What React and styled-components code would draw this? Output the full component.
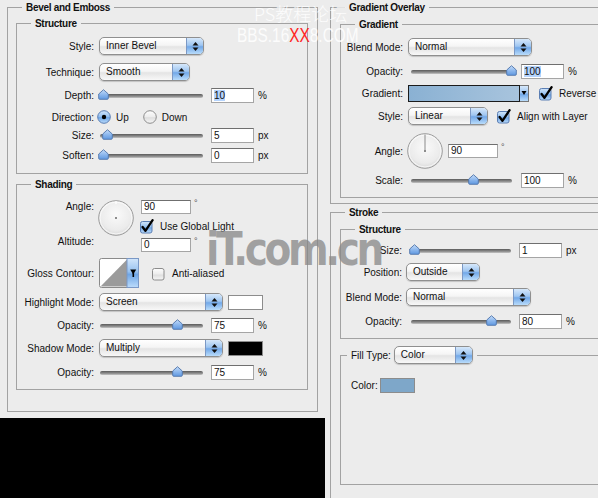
import React from "react";
import styled, { createGlobalStyle } from "styled-components";

const GlobalStyle = createGlobalStyle`
  body {
    margin: 0;
    background: #ececec;
    font-family: "Liberation Sans", Arial, sans-serif;
    font-size: 10px;
    color: #111;
  }
`;

const Page = styled.div`
  position: relative;
  display: flex;
  width: 598px;
  height: 498px;
  overflow: hidden;
  background: #ececec;
`;

const LeftCol = styled.div`
  flex: none;
  width: 325px;
  display: flex;
  flex-direction: column;
  padding-top: 1px;
`;

const RightCol = styled.div`
  flex: 1;
  margin-left: 5px;
  padding-top: 1px;
  display: flex;
  flex-direction: column;
  overflow: hidden;
`;

const Group = styled.fieldset`
  flex: none;
  margin: ${(p) => p.$m || "0"};
  padding: 0 0 ${(p) => p.$pb || 0}px 0;
  border: 1px solid #a2a2a2;
  min-width: 0;
  width: ${(p) => (p.$w ? p.$w + "px" : "auto")};
`;

const Legend = styled.legend`
  margin-left: 14px;
  padding: 0 4px;
  font-weight: bold;
  font-size: 10px;
  line-height: 13px;
  letter-spacing: -0.3px;
`;

const FillLegend = styled.legend`
  display: flex;
  align-items: center;
  margin-left: 6px;
  padding: 0 4px;
  gap: 3px;
`;

const Row = styled.div`
  display: flex;
  align-items: center;
  height: ${(p) => p.$h || 18}px;
  margin-top: ${(p) => p.$mt || 0}px;
`;

const Label = styled.span`
  flex: none;
  width: ${(p) => p.$w}px;
  margin-right: ${(p) => (p.$gap === undefined ? 5 : p.$gap)}px;
  text-align: right;
  white-space: nowrap;
`;

const PlainLabel = styled.span`
  margin: 0 2px 0 10px;
`;

const OptText = styled.span`
  margin: 0 ${(p) => p.$mr || 0}px 0 5px;
  white-space: nowrap;
`;

const Unit = styled.span`
  margin-left: 4px;
`;

/* popup menu */
const PopupBox = styled.div`
  flex: none;
  display: flex;
  box-sizing: border-box;
  width: ${(p) => p.$w}px;
  height: 18px;
  border: 1px solid #8f8f8f;
  border-radius: 5px;
  background: linear-gradient(#ffffff, #f5f5f5 45%, #e4e4e4 55%, #f8f8f8);
  box-shadow: 0 1px 1px rgba(0, 0, 0, 0.18);
  overflow: hidden;
`;

const PopupText = styled.span`
  flex: 1;
  padding-left: 6px;
  line-height: 16px;
  white-space: nowrap;
`;

const PopupArrows = styled.span`
  flex: none;
  width: 16px;
  display: flex;
  align-items: center;
  justify-content: center;
  border-left: 1px solid #7b98c4;
  background: linear-gradient(#d6e8fb, #9fc6f1 45%, #72a8e8 55%, #b9dcfb);
`;

const Popup = ({ w, value }) => (
  <PopupBox $w={w}>
    <PopupText>{value}</PopupText>
    <PopupArrows>
      <svg width="7" height="11" viewBox="0 0 7 11">
        <path d="M3.5 1 L6.5 4.5 H0.5 Z" fill="#111" />
        <path d="M0.5 6.5 H6.5 L3.5 10 Z" fill="#111" />
      </svg>
    </PopupArrows>
  </PopupBox>
);

/* slider */
const SliderWrap = styled.div`
  position: relative;
  flex: none;
  width: ${(p) => p.$w}px;
  height: 12px;
  margin-left: ${(p) => p.$ml || 0}px;
  margin-right: ${(p) => (p.$mr === undefined ? 8 : p.$mr)}px;
`;

const Track = styled.div`
  position: absolute;
  left: 0;
  right: 0;
  top: 5px;
  height: 4px;
  border-radius: 2px;
  background: linear-gradient(#5a5a5a, #8f8f8f 60%, #c6c6c6);
`;

const Thumb = styled.svg`
  position: absolute;
  top: 0;
`;

const Slider = ({ w, ml, mr, pct }) => (
  <SliderWrap $w={w} $ml={ml} $mr={mr}>
    <Track />
    <Thumb
      width="11"
      height="11"
      viewBox="0 0 11 11"
      style={{ left: -2 + pct * (w - 4) }}
    >
      <path
        d="M5.5 0.7 L10.3 5 V9.3 Q10.3 10.3 9.3 10.3 H1.7 Q0.7 10.3 0.7 9.3 V5 Z"
        fill="url(#thumbBlue)"
        stroke="#4f74aa"
        strokeWidth="0.9"
      />
    </Thumb>
  </SliderWrap>
);

/* text fields */
const NumBox = styled.div`
  flex: none;
  box-sizing: border-box;
  width: ${(p) => p.$w || 43}px;
  height: ${(p) => p.$h || 15}px;
  padding-left: 2px;
  background: #fff;
  border: 1px solid #a5a5a5;
  border-top-color: #6f6f6f;
  line-height: ${(p) => (p.$h || 15) - 2}px;
  white-space: nowrap;
`;

const Selected = styled.span`
  background: #b5d4fd;
`;

const InputGroup = styled.div`
  display: flex;
  align-items: flex-start;
  margin-left: ${(p) => p.$ml || 0}px;
`;

const Degree = styled.span`
  margin: -2px 0 0 3px;
  font-size: 9px;
  color: #555;
`;

const Swatch = styled.div`
  flex: none;
  box-sizing: border-box;
  width: 35px;
  height: 15px;
  margin-left: ${(p) => p.$ml || 0}px;
  background: ${(p) => p.$bg};
  border: 1px solid #8c8c8c;
`;

/* check boxes, radios */
const BoxSvg = styled.svg`
  flex: none;
  margin-left: ${(p) => p.$ml || 0}px;
`;

const Check = ({ on, ml }) => (
  <BoxSvg $ml={ml} width="15" height="15" viewBox="0 0 15 15">
    <rect
      x="0.5"
      y="2.5"
      width="11.5"
      height="11.5"
      rx="2"
      fill={on ? "url(#aquaBlue)" : "url(#aquaGray)"}
      stroke={on ? "#5b7eb3" : "#8c8c8c"}
    />
    {on && (
      <path
        d="M2.6 8 L5.4 11.8 L12.6 1.2"
        stroke="#000"
        strokeWidth="2.3"
        fill="none"
        strokeLinecap="round"
        strokeLinejoin="round"
      />
    )}
  </BoxSvg>
);

const Radio = ({ on, ml }) => (
  <BoxSvg $ml={ml} width="14" height="14" viewBox="0 0 14 14">
    <circle
      cx="7"
      cy="7"
      r="6.3"
      fill={on ? "url(#aquaBlue)" : "url(#aquaGray)"}
      stroke={on ? "#5b7eb3" : "#8c8c8c"}
    />
    {on && <circle cx="7" cy="7" r="2.2" fill="#000" />}
  </BoxSvg>
);

const Dial = ({ ml, tick }) => (
  <BoxSvg $ml={ml} width="36" height="36" viewBox="0 0 36 36">
    <circle cx="18" cy="18" r="17.3" fill="url(#dialFill)" stroke="#9d9d9d" />
    <circle cx="18" cy="18" r="16" fill="none" stroke="#ffffff" strokeOpacity="0.7" />
    {tick === "line" ? (
      <line x1="18" y1="18" x2="18" y2="1.5" stroke="#8a8a8a" strokeWidth="1" />
    ) : (
      <line x1="18" y1="1" x2="18" y2="4" stroke="#ffffff" strokeWidth="1.2" />
    )}
    <rect x="17" y="17" width="2" height="2" fill="#8c8c8c" />
  </BoxSvg>
);

const ContourPicker = () => (
  <BoxSvg width="40" height="30" viewBox="0 0 40 30">
    <rect x="0.5" y="0.5" width="39" height="29" rx="2" fill="#fff" stroke="#8a8a8a" />
    <polygon points="1.5,28.5 28,1.5 28,28.5" fill="#9b9b9b" />
    <rect x="28" y="0.5" width="11.5" height="29" fill="url(#aquaBlue)" stroke="#7a98c6" />
    <path d="M31.2 11.5 H37.2 L34.2 16.5 Z" fill="#000" />
    <rect x="33.5" y="15" width="1.6" height="4" fill="#000" />
  </BoxSvg>
);

const GradientPick = styled.div`
  flex: none;
  display: flex;
  height: 17px;
`;

const GradientBar = styled.div`
  box-sizing: border-box;
  width: 112px;
  border: 1px solid #1c1c1c;
  background: linear-gradient(90deg, #8ab1d3, #a8c4dd);
`;

const GradientArrow = styled.div`
  box-sizing: border-box;
  width: 9px;
  display: flex;
  align-items: center;
  justify-content: center;
  border: 1px solid #777;
  border-left: none;
  background: linear-gradient(#d6e8fb, #9fc6f1 45%, #72a8e8 55%, #b9dcfb);
`;

/* angle / altitude block */
const AngleBlock = styled.div`
  display: flex;
  height: 52px;
  margin-top: 9px;
`;

const LabelStack = styled.div`
  flex: none;
  width: 77px;
  margin-right: 4px;
  padding-bottom: 4px;
  display: flex;
  flex-direction: column;
  justify-content: space-between;
  text-align: right;
  line-height: 13px;
`;

const FieldStack = styled.div`
  margin-left: 7px;
  display: flex;
  flex-direction: column;
  justify-content: space-between;
`;

const CheckLine = styled.div`
  display: flex;
  align-items: center;
  margin-left: -1px;
`;

const BlackBox = styled.div`
  flex: 1;
  margin-top: 6px;
  background: #000;
`;

/* watermarks over the dialog */
const MarkCn = styled.div`
  position: absolute;
  left: 254px;
  top: 4px;
  font-family: "Noto Sans CJK SC", sans-serif;
  font-size: 18px;
  font-weight: 300;
  line-height: 18px;
  color: rgba(255, 255, 255, 0.85);
  pointer-events: none;
`;

const MarkUrl = styled.div`
  position: absolute;
  left: 237px;
  top: 25px;
  font-family: "Liberation Sans", Arial, sans-serif;
  font-size: 19.5px;
  line-height: 20px;
  color: rgba(255, 255, 255, 0.85);
  transform: scaleX(0.79);
  transform-origin: left top;
  white-space: nowrap;
  pointer-events: none;
`;

const Red = styled.span`
  color: #ff2525;
`;

const MarkIt = styled.div`
  position: absolute;
  left: 206px;
  top: 226px;
  font-family: "DejaVu Sans", sans-serif;
  font-weight: bold;
  font-size: 46px;
  line-height: 46px;
  letter-spacing: -4px;
  color: rgba(135, 135, 135, 0.75);
  transform: scaleX(0.85);
  transform-origin: left top;
  white-space: nowrap;
  pointer-events: none;
`;

const Defs = styled.svg`
  position: absolute;
  width: 0;
  height: 0;
`;

const App = () => {
  return (
    <Page>
      <GlobalStyle />
      <Defs>
        <defs>
          <linearGradient id="aquaBlue" x1="0" y1="0" x2="0" y2="1">
            <stop offset="0" stopColor="#d2e6fb" />
            <stop offset="0.45" stopColor="#98c2f0" />
            <stop offset="0.55" stopColor="#6fa6e6" />
            <stop offset="1" stopColor="#bcdcfb" />
          </linearGradient>
          <linearGradient id="aquaGray" x1="0" y1="0" x2="0" y2="1">
            <stop offset="0" stopColor="#fdfdfd" />
            <stop offset="0.5" stopColor="#ececec" />
            <stop offset="0.55" stopColor="#dedede" />
            <stop offset="1" stopColor="#f7f7f7" />
          </linearGradient>
          <linearGradient id="thumbBlue" x1="0" y1="0" x2="0" y2="1">
            <stop offset="0" stopColor="#c4dcf8" />
            <stop offset="0.5" stopColor="#8fb9ee" />
            <stop offset="1" stopColor="#5f98e0" />
          </linearGradient>
          <radialGradient id="dialFill" cx="0.5" cy="0.4" r="0.6">
            <stop offset="0" stopColor="#fafafa" />
            <stop offset="0.75" stopColor="#ebebeb" />
            <stop offset="1" stopColor="#d8d8d8" />
          </radialGradient>
        </defs>
      </Defs>

      <LeftCol>
        <Group $m="0 7px" $pb={21}>
          <Legend>Bevel and Emboss</Legend>
          <Group $m="3px 9px 0 8px" $pb={9}>
            <Legend>Structure</Legend>
            <Row $mt={7}>
              <Label $w={77}>Style:</Label>
              <Popup w={105} value="Inner Bevel" />
            </Row>
            <Row $mt={8}>
              <Label $w={77}>Technique:</Label>
              <Popup w={91} value="Smooth" />
            </Row>
            <Row $mt={5}>
              <Label $w={77}>Depth:</Label>
              <Slider w={103} ml={1} pct={0} />
              <NumBox>
                <Selected>10</Selected>
              </NumBox>
              <Unit>%</Unit>
            </Row>
            <Row $mt={4}>
              <Label $w={77}>Direction:</Label>
              <Radio on ml={-2} />
              <OptText $mr={14}>Up</OptText>
              <Radio />
              <OptText>Down</OptText>
            </Row>
            <Row>
              <Label $w={77}>Size:</Label>
              <Slider w={103} ml={1} pct={0.04} />
              <NumBox>5</NumBox>
              <Unit>px</Unit>
            </Row>
            <Row $mt={2}>
              <Label $w={77}>Soften:</Label>
              <Slider w={103} ml={1} pct={0} />
              <NumBox>0</NumBox>
              <Unit>px</Unit>
            </Row>
          </Group>

          <Group $m="4px 9px 0 8px" $pb={8}>
            <Legend>Shading</Legend>
            <AngleBlock>
              <LabelStack>
                <span>Angle:</span>
                <span>Altitude:</span>
              </LabelStack>
              <Dial ml={0} tick="top" />
              <FieldStack>
                <InputGroup>
                  <NumBox $w={50} $h={14}>90</NumBox>
                  <Degree>°</Degree>
                </InputGroup>
                <CheckLine>
                  <Check on />
                  <OptText $mr={0}>Use Global Light</OptText>
                </CheckLine>
                <InputGroup>
                  <NumBox $w={50} $h={14}>0</NumBox>
                  <Degree>°</Degree>
                </InputGroup>
              </FieldStack>
            </AngleBlock>
            <Row $h={30} $mt={6}>
              <Label $w={77}>Gloss Contour:</Label>
              <ContourPicker />
              <Check ml={13} />
              <OptText>Anti-aliased</OptText>
            </Row>
            <Row $mt={5}>
              <Label $w={77}>Highlight Mode:</Label>
              <Popup w={124} value="Screen" />
              <Swatch $ml={5} $bg="#ffffff" />
            </Row>
            <Row $mt={5}>
              <Label $w={77}>Opacity:</Label>
              <Slider w={103} ml={1} pct={0.75} />
              <NumBox>75</NumBox>
              <Unit>%</Unit>
            </Row>
            <Row $mt={5}>
              <Label $w={77}>Shadow Mode:</Label>
              <Popup w={124} value="Multiply" />
              <Swatch $ml={5} $bg="#000000" />
            </Row>
            <Row $mt={6}>
              <Label $w={77}>Opacity:</Label>
              <Slider w={103} ml={1} pct={0.75} />
              <NumBox>75</NumBox>
              <Unit>%</Unit>
            </Row>
          </Group>
        </Group>
        <BlackBox />
      </LeftCol>

      <RightCol>
        <Group $w={320} $pb={5}>
          <Legend>Gradient Overlay</Legend>
          <Group $m="4px 0 0 9px" $w={300} $pb={8}>
            <Legend>Gradient</Legend>
            <Row $mt={7}>
              <Label $w={62}>Blend Mode:</Label>
              <Popup w={124} value="Normal" />
            </Row>
            <Row $mt={6}>
              <Label $w={62}>Opacity:</Label>
              <Slider w={101} ml={3} mr={9} pct={1} />
              <NumBox>
                <Selected>100</Selected>
              </NumBox>
              <Unit>%</Unit>
            </Row>
            <Row $mt={4}>
              <Label $w={62}>Gradient:</Label>
              <GradientPick>
                <GradientBar />
                <GradientArrow>
                  <svg width="6" height="6" viewBox="0 0 6 6">
                    <path d="M0.5 1 H5.5 L3 5 Z" fill="#000" />
                  </svg>
                </GradientArrow>
              </GradientPick>
              <Check on ml={10} />
              <OptText>Reverse</OptText>
            </Row>
            <Row $mt={5}>
              <Label $w={62}>Style:</Label>
              <Popup w={80} value="Linear" />
              <Check on ml={9} />
              <OptText>Align with Layer</OptText>
            </Row>
            <Row $h={36} $mt={8}>
              <Label $w={62}>Angle:</Label>
              <Dial ml={-1} tick="line" />
              <InputGroup $ml={5}>
                <NumBox $w={50} $h={14}>90</NumBox>
                <Degree>°</Degree>
              </InputGroup>
            </Row>
            <Row $mt={2}>
              <Label $w={62}>Scale:</Label>
              <Slider w={101} ml={3} mr={9} pct={0.61} />
              <NumBox>100</NumBox>
              <Unit>%</Unit>
            </Row>
          </Group>
        </Group>

        <Group $m="2px 0 0 0" $w={320} $pb={60}>
          <Legend>Stroke</Legend>
          <Group $m="4px 0 0 9px" $w={300} $pb={8}>
            <Legend>Structure</Legend>
            <Row $mt={5}>
              <Label $w={61} $gap={4}>Size:</Label>
              <Slider w={100} ml={5} pct={0} />
              <NumBox>1</NumBox>
              <Unit>px</Unit>
            </Row>
            <Row $mt={4}>
              <Label $w={61} $gap={4}>Position:</Label>
              <Popup w={74} value="Outside" />
            </Row>
            <Row $mt={7}>
              <Label $w={61} $gap={4}>Blend Mode:</Label>
              <Popup w={125} value="Normal" />
            </Row>
            <Row $mt={6}>
              <Label $w={61} $gap={4}>Opacity:</Label>
              <Slider w={100} ml={5} pct={0.8} />
              <NumBox>80</NumBox>
              <Unit>%</Unit>
            </Row>
          </Group>
          <Group $m="7px 0 0 9px" $w={300} $pb={90}>
            <FillLegend>
              <span>Fill Type:</span>
              <Popup w={79} value="Color" />
            </FillLegend>
            <Row $mt={12}>
              <PlainLabel>Color:</PlainLabel>
              <Swatch $bg="#7ea7c9" />
            </Row>
          </Group>
        </Group>
      </RightCol>

      <MarkCn>PS教程论坛</MarkCn>
      <MarkUrl>
        BBS.16<Red>XX</Red>8.COM
      </MarkUrl>
      <MarkIt>iT.com.cn</MarkIt>
    </Page>
  );
};

export default App;
